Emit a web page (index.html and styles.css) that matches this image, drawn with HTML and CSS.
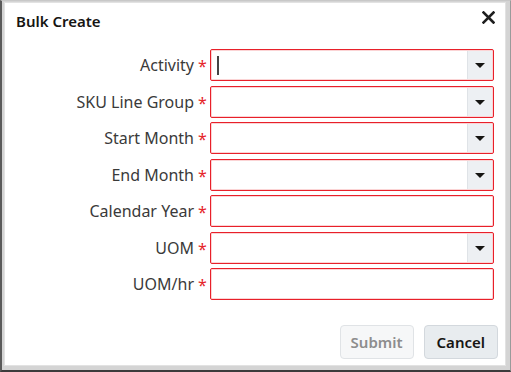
FILE: index.html
```html
<!doctype html>
<html lang="en">
<head>
    <meta charset="UTF-8">
    <title>Bulk Create</title>
    <link rel="stylesheet" href="styles.css">
</head>
<body>
    <div class="frame">
        <div class="dialog">
            <div class="header">
                <span class="title">Bulk Create</span>
                <svg class="close" width="13" height="13" viewBox="0 0 13 13">
                    <path d="M1.5 1.5 L11.5 11.5 M11.5 1.5 L1.5 11.5" stroke="#1e1e1e" stroke-width="2.6" stroke-linecap="square"/>
                </svg>
            </div>

            <div class="form">
                <label class="lbl">Activity</label><span class="req">*</span>
                <div class="field select"><span class="caret"></span><span class="arrow"></span></div>

                <label class="lbl">SKU Line Group</label><span class="req">*</span>
                <div class="field select"><span class="arrow"></span></div>

                <label class="lbl">Start Month</label><span class="req">*</span>
                <div class="field select"><span class="arrow"></span></div>

                <label class="lbl">End Month</label><span class="req">*</span>
                <div class="field select"><span class="arrow"></span></div>

                <label class="lbl">Calendar Year</label><span class="req">*</span>
                <div class="field"></div>

                <label class="lbl">UOM</label><span class="req">*</span>
                <div class="field select"><span class="arrow"></span></div>

                <label class="lbl">UOM/hr</label><span class="req">*</span>
                <div class="field"></div>
            </div>

            <div class="footer">
                <button class="btn disabled">Submit</button>
                <button class="btn cancel">Cancel</button>
            </div>
        </div>
    </div>
</body>
</html>
```

FILE: styles.css
```css
html, body {
    margin: 0;
    padding: 0;
    background: #fff;
}

body {
    font-family: "Noto Sans", "Open Sans", sans-serif;
    color: #333;
}

.frame {
    width: 511px;
    height: 372px;
    box-sizing: border-box;
    border-left: 2px solid #5a5a5a;
    border-bottom: 2px solid #3c3c3c;
    border-top: 1px solid #c8c8c8;
    border-right: 1px solid #9a9a9a;
    background: #d4d4d4;
    padding: 1px 4px 4px 2px;
}

.dialog {
    height: 100%;
    box-sizing: border-box;
    background: #fff;
    border: 1px solid #e2e2e2;
    display: flex;
    flex-direction: column;
}

.header {
    display: flex;
    justify-content: space-between;
    align-items: center;
    padding: 3px 10px 0 11px;
    height: 29px;
}

.title {
    font-size: 15px;
    font-weight: 600;
    color: #161513;
}

.close {
    display: block;
    margin-top: -6px;
}

.form {
    display: grid;
    grid-template-columns: 189px 16px 284px;
    grid-auto-rows: 32px;
    row-gap: 4.5px;
    align-items: center;
    padding-top: 14px;
}

.lbl {
    text-align: right;
    font-size: 16px;
    color: #3a3a3a;
}

.req {
    color: #e5252a;
    font-size: 16px;
    padding-left: 4px;
    margin-top: 2px;
}

.field {
    position: relative;
    height: 32px;
    box-sizing: border-box;
    border: 1px solid #e8202a;
    border-radius: 2px;
    box-shadow: inset 0 0 0 1px #fbd4d5;
    background: #fff;
}

.arrow {
    position: absolute;
    top: 1px;
    right: 1px;
    bottom: 1px;
    width: 24px;
    background: #edf0f3;
    border-left: 1px solid #dfe3e7;
}

.arrow::after {
    content: "";
    position: absolute;
    left: 7px;
    top: 12px;
    border-left: 5px solid transparent;
    border-right: 5px solid transparent;
    border-top: 5px solid #161513;
}

.caret {
    position: absolute;
    left: 6px;
    top: 6px;
    width: 2px;
    height: 19px;
    background: #444;
}

.footer {
    margin-top: auto;
    display: flex;
    justify-content: flex-end;
    gap: 10px;
    padding: 0 7px 6px 0;
}

.btn {
    font-family: "Noto Sans", "Open Sans", sans-serif;
    font-size: 15px;
    font-weight: 600;
    height: 34px;
    padding: 0 10px;
    border: 1px solid #d3d8dd;
    border-radius: 4px;
    background: #e8ecef;
    color: #161513;
}

.btn.cancel {
    padding: 0 12px;
}

.btn.disabled {
    background: #f6f7f8;
    border-color: #e0e3e6;
    color: #8d8d8d;
}
```
